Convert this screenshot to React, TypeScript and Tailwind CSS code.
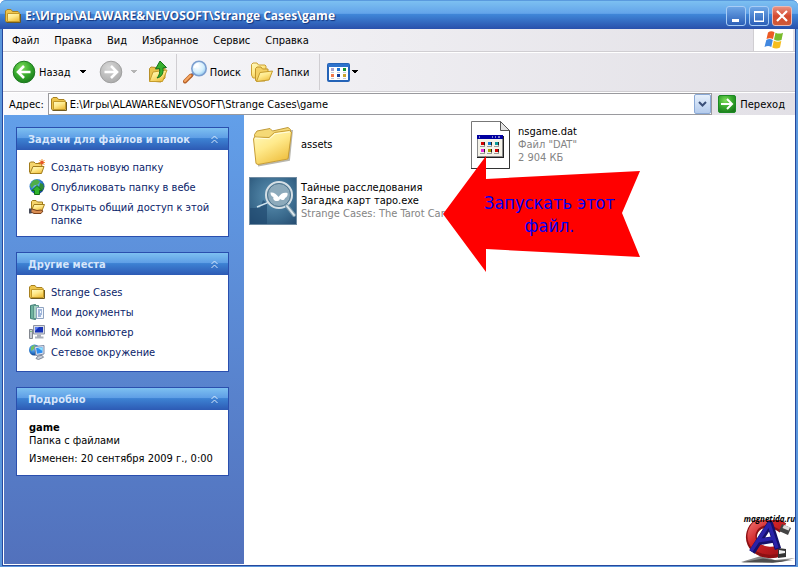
import { useState } from "react";
import type { ReactNode } from "react";

const menuItems = ["Файл", "Правка", "Вид", "Избранное", "Сервис", "Справка"];
const initialPath = "E:\\Игры\\ALAWARE&NEVOSOFT\\Strange Cases\\game";

function Gradients() {
  return (
    <svg className="absolute h-0 w-0" aria-hidden="true">
      <defs>
        <linearGradient id="folder" x1="0" y1="0" x2="0.6" y2="1">
          <stop offset="0" stopColor="#fffbc4" />
          <stop offset="0.5" stopColor="#ffea8c" />
          <stop offset="1" stopColor="#f0c244" />
        </linearGradient>
        <radialGradient id="green" cx="0.4" cy="0.3" r="0.75">
          <stop offset="0" stopColor="#7fdc5c" />
          <stop offset="0.55" stopColor="#35a82c" />
          <stop offset="1" stopColor="#1a7a1c" />
        </radialGradient>
        <radialGradient id="grey" cx="0.4" cy="0.3" r="0.75">
          <stop offset="0" stopColor="#d8d8d8" />
          <stop offset="1" stopColor="#a9a9a9" />
        </radialGradient>
        <radialGradient id="lens" cx="0.4" cy="0.35" r="0.7">
          <stop offset="0" stopColor="#ffffff" />
          <stop offset="0.6" stopColor="#d3eefc" />
          <stop offset="1" stopColor="#8cc6ee" />
        </radialGradient>
        <radialGradient id="globe" cx="0.4" cy="0.35" r="0.7">
          <stop offset="0" stopColor="#8ccbf8" />
          <stop offset="0.6" stopColor="#2a78cc" />
          <stop offset="1" stopColor="#123a80" />
        </radialGradient>
        <radialGradient id="teal" cx="0.5" cy="0.4" r="0.8">
          <stop offset="0" stopColor="#5d93b4" />
          <stop offset="0.6" stopColor="#3a6a8d" />
          <stop offset="1" stopColor="#23496d" />
        </radialGradient>
        <linearGradient id="magnet" x1="0" y1="0" x2="1" y2="1">
          <stop offset="0" stopColor="#ee6a68" />
          <stop offset="0.4" stopColor="#cf2226" />
          <stop offset="1" stopColor="#a31317" />
        </linearGradient>
      </defs>
    </svg>
  );
}

function FolderIcon() {
  return (
    <svg width="16" height="16" viewBox="0 0 16 16" className="shrink-0">
      <path d="M.5 13V3L2 1.500h4l1.500 2h5.500l1 1V13l-1 1H1.500z" fill="#eec54c" stroke="#a88120" />
      <path d="M2.500 5.500h12v8h-12z" fill="url(#folder)" stroke="#c39a2a" />
      <path d="M1.500 14.500h14V6" fill="none" stroke="#6f5a20" />
    </svg>
  );
}

function NewFolderIcon() {
  return (
    <svg width="16" height="16" viewBox="0 0 16 16" className="shrink-0">
      <path d="M.5 13.500V4l1-1h3.500l1.500 1.500h6V7" fill="#f5d56c" stroke="#a27c1c" />
      <path d="M1 14.500L4 7.500h11l-2.500 7z" fill="url(#folder)" stroke="#a27c1c" />
      <path d="M13 0v7M9.500 3.500h7M10.500 1l5 5M15.500 1l-5 5" stroke="#f49a3c" />
      <circle cx="13" cy="3.500" r="1.700" fill="#e5532a" />
    </svg>
  );
}

function PublishIcon() {
  return (
    <svg width="16" height="16" viewBox="0 0 16 16" className="shrink-0">
      <circle cx="8" cy="7.500" r="7.500" fill="url(#globe)" />
      <path d="M4 1.500l4-1 3 2-2 3-4 1-2.500 3L1 6z" fill="#4fae48" />
      <path d="M11 4l3 1 1 4-3 3-2-3z" fill="#2f8b35" />
      <path d="M8 6.500l5 5h-2.500v4h-5v-4H3z" fill="#2fb52c" stroke="#126b18" />
    </svg>
  );
}

function ShareIcon() {
  return (
    <svg width="16" height="16" viewBox="0 0 16 16" className="shrink-0">
      <path d="M2.500 11V2.500l1-1H7l1.500 1.500h5V6" fill="#f5d56c" stroke="#a27c1c" />
      <path d="M2.500 11.500L5 5.500h10.500l-2.500 6z" fill="url(#folder)" stroke="#a27c1c" />
      <path d="M0 11l3-1 5 1.500 4-.5 2 1-2 2.500H5L3 13.500H0z" fill="#d98d52" stroke="#7b431c" />
      <path d="M0 9.500h2.500v5H0z" fill="#474b58" />
    </svg>
  );
}

function DocumentsIcon() {
  return (
    <svg width="16" height="16" viewBox="0 0 16 16" className="shrink-0">
      <path d="M1.500 1.500l5-1v15l-5-1z" fill="#6fb3a0" stroke="#3f7d74" />
      <path d="M4.500 1.500h5v13h-5z" fill="#a5d2c2" stroke="#5b958a" />
      <path d="M7.500 3.500h7v11h-7z" fill="#f4f8fe" stroke="#8fa3c0" />
      <path d="M9 6h4M9 8h2M12 8h1M9 10h4M9 12h3" stroke="#4f77b8" />
    </svg>
  );
}

function ComputerIcon() {
  return (
    <svg width="16" height="16" viewBox="0 0 16 16" className="shrink-0">
      <path d="M.5 5.500h3v9h-3z" fill="#c9cdd4" stroke="#82878f" />
      <path d="M1.500 7.500h1" stroke="#31a531" />
      <path d="M4.500 1.500h11v8.500h-11z" fill="#d7dbe4" stroke="#8d93a3" />
      <path d="M6 3h8v5.500H6z" fill="#1733b8" />
      <path d="M6 3h4L6 7z" fill="#5c7df0" />
      <path d="M8 10.500h4v2h2.500v2H6v-2h2z" fill="#a9afba" />
    </svg>
  );
}

function NetworkIcon() {
  return (
    <svg width="16" height="16" viewBox="0 0 16 16" className="shrink-0">
      <circle cx="5.500" cy="6" r="5.500" fill="url(#globe)" />
      <path d="M2 3l3-2 2 1-2 3-3 2z" fill="#72c45c" />
      <path d="M5.500 2.500l9.500-1v8.500l-8 1.500z" fill="#dfe6f2" stroke="#7f8ca6" />
      <path d="M7 4l6.500-.7v5.400l-5.500 1z" fill="#2d8df0" />
      <path d="M9 4l4.500-.5V7z" fill="#8ce1ff" />
      <path d="M9 12l4-.7 1.500 2-5 2.200-2.500-1z" fill="#c7ced9" stroke="#7d8799" />
    </svg>
  );
}

function ArrowCircle({ fill, stroke, flip }: { fill: string; stroke: string; flip?: boolean }) {
  return (
    <svg width="24" height="24" viewBox="0 0 24 24" className="shrink-0">
      <circle cx="12" cy="12" r="10.800" fill={fill} stroke={stroke} />
      <path
        d={flip ? "M5.500 12h12M12 6l6 6-6 6" : "M18.500 12h-12M12 6l-6 6 6 6"}
        fill="none"
        stroke="#fff"
        strokeWidth="2.600"
      />
    </svg>
  );
}

function UpFolderIcon() {
  return (
    <svg width="22" height="24" viewBox="0 0 22 24" className="shrink-0">
      <path d="M1.500 21V8.500L3 7l5 .500L9.500 9 17 8v10l-4 4z" fill="#eac34c" stroke="#b8902a" />
      <path d="M1.500 21.500L5 12l14-2-4.500 11.500z" fill="url(#folder)" stroke="#c59c2c" />
      <path d="M12 1l6.500 6.500-3.500.3c.6 5.500-1 9-6 10.200 2.500-2.500 3-5.500 2.600-9.500L7.500 9z" fill="#38b02e" stroke="#15711a" />
    </svg>
  );
}

function SearchIcon() {
  return (
    <svg width="25" height="24" viewBox="0 0 25 24" className="shrink-0">
      <path d="M10.500 13.500L7 17" stroke="#7189b8" strokeWidth="3" />
      <path d="M8 15.500L2 21.500" stroke="#b8622a" strokeWidth="4" strokeLinecap="round" />
      <path d="M7.500 15.500L2 21" stroke="#f7a862" strokeWidth="2" strokeLinecap="round" />
      <circle cx="16" cy="8.500" r="7.200" fill="url(#lens)" stroke="#7c9fd0" strokeWidth="1.600" />
      <path d="M11.500 8a5 5 0 0 1 4-4" fill="none" stroke="#fff" strokeWidth="2" />
    </svg>
  );
}

function FoldersIcon() {
  return (
    <svg width="24" height="24" viewBox="0 0 24 24" className="shrink-0">
      <path d="M1.500 15V4.500L3 3h4l1.500 2H15l1 1v10l-2 2H3z" fill="url(#folder)" stroke="#cba033" />
      <path d="M5.500 20V8.500L7 7h4l1.500 2H18v4l-3 8H6z" fill="#f4d164" stroke="#c0952c" />
      <path d="M6.500 21.500L10 12.500 22.500 11 19 20z" fill="url(#folder)" stroke="#c59c2c" />
    </svg>
  );
}

function ViewsIcon() {
  return (
    <svg width="23" height="19" viewBox="0 0 23 19" className="shrink-0">
      <rect x="1" y="1" width="21" height="17" rx="1" fill="#fff" stroke="#2463b7" strokeWidth="2" />
      <path d="M1 1h21v3H1z" fill="#2d72cc" />
      <path d="M4 5h3v3H4z" fill="#a9a3cc" />
      <path d="M10 5h3v3h-3z" fill="#1f74d4" />
      <path d="M16 5h3v3h-3z" fill="#149435" />
      <path d="M4 11h3v3H4z" fill="#f2794b" />
      <path d="M10 11h3v3h-3z" fill="#173f9b" />
      <path d="M16 11h3v3h-3z" fill="#cca32a" />
      <path d="M4 15.500h3M10 15.500h3M16 15.500h3M4 9.500h3M10 9.500h3M16 9.500h3" stroke="#c4c9d6" />
    </svg>
  );
}

function Caret({ className }: { className: string }) {
  return (
    <svg width="7" height="4" viewBox="0 0 7 4" className={className} shapeRendering="crispEdges">
      <path d="M0 0h6L3 3.500z" fill="currentColor" />
    </svg>
  );
}

function WindowsFlag() {
  return (
    <svg width="20" height="18" viewBox="0 0 20 18">
      <path d="M4 1.500c2-1.500 4.500-1.500 6.500-.3L9 8C7 7 4.500 7 2.500 8z" fill="#ec5a24" />
      <path d="M11.500 1.700c2.500 1.200 5 1.200 7.500 0L17.500 9c-2.500 1-5 1-7.500-.5z" fill="#79bb2c" />
      <path d="M2.300 9c2-1.200 4.500-1.200 6.500 0l-1.500 7C5.500 14.700 3 14.500.500 16z" fill="#4188e0" />
      <path d="M9.800 9.500c2.500 1.500 5 1.500 7.500.5L16 16.500c-2.500 1.500-5.500 1.200-7.700 0z" fill="#f6bd1e" />
    </svg>
  );
}

function BigFolder() {
  return (
    <svg width="48" height="48" viewBox="0 0 48 48" className="shrink-0">
      <path d="M9 44.500l31-5.500L43 9" fill="none" stroke="#b9b7ae" strokeWidth="2" />
      <path d="M5.500 13.500L8 10l13-2.500 2.500 2.500 15.500-3.500 2.500 2L39 37 9 42z" fill="#f5d976" stroke="#c09a3a" />
      <path d="M4.500 18l1-2 14.500.5 5.500-5L40 9.500l2.500 1.500-3.500 27L9 43.500l-2-1z" fill="url(#folder)" stroke="#c79d35" />
      <path d="M6 17l14.500.8 5.500-5 15-2" fill="none" stroke="#fffde0" />
    </svg>
  );
}

function ExeIcon() {
  return (
    <svg width="48" height="48" viewBox="0 0 48 48" className="shrink-0">
      <rect x=".5" y=".5" width="47" height="47" fill="url(#teal)" stroke="#6f8ba2" />
      <path d="M1 31h10l3-8 4 3v21H1z" fill="#214a70" opacity="0.700" />
      <path d="M8 30l10-4 2-3" fill="none" stroke="#cfe3ee" strokeWidth="1.500" />
      <circle cx="30" cy="18" r="13" fill="#7f9fb2" stroke="#d5dfe5" strokeWidth="2" />
      <circle cx="30" cy="18" r="11.500" fill="#8daabb" stroke="#4d748e" />
      <path d="M29.500 20c-2-3-5-5-8-4.500 0 2.500 1 4 3 4.500-1 2 1 4.500 4 4 1.500 0 2-1 2.500-2 2 1.500 4.500 1.500 5-1 2-1 3-2.500 2.500-5-4-1-6.500.5-9 4z" fill="#fff" />
      <path d="M38 29l7 9" stroke="#7b9aac" strokeWidth="4" strokeLinecap="round" />
      <path d="M38 29l7 9" stroke="#dde7ec" strokeWidth="2" strokeLinecap="round" />
    </svg>
  );
}

const datDots = [
  { x: 15, y: 22, color: "#d40000" },
  { x: 22, y: 22, color: "#0a7ad8" },
  { x: 29, y: 22, color: "#0a9a9a" },
  { x: 15, y: 29, color: "#e82ad8" },
  { x: 22, y: 29, color: "#a8a000" },
  { x: 29, y: 29, color: "#d40000" },
];

function DatIcon() {
  return (
    <svg width="48" height="48" viewBox="0 0 48 48" className="shrink-0">
      <path d="M5.500.5h29l9 9v38h-38z" fill="#fff" stroke="#777" />
      <path d="M5 47.500h38.500V9" fill="none" stroke="#333" />
      <path d="M34.500.5v9h9z" fill="#e2e2e2" stroke="#555" />
      <path d="M11 15h27v22H11z" fill="#222" />
      <path d="M11.500 14.500h25v21h-25z" fill="#f4f2e8" stroke="#8d8d8d" />
      <path d="M11 14h26v4H11z" fill="#0000a0" />
      <path d="M13 16h1M26 16h1M29 16h1M32 16h2" stroke="#fff" />
      {datDots.map((d) => (
        <g key={`${d.x}-${d.y}`}>
          <rect x={d.x} y={d.y - 1} width="3" height="3" fill={d.color} />
          <path d={`M${d.x + 3.5} ${d.y - 1}v3.500`} stroke="#222" />
          <path d={`M${d.x - 1} ${d.y + 3.5}h5`} stroke="#999" />
        </g>
      ))}
    </svg>
  );
}

function MagnetLogo() {
  return (
    <svg width="54" height="44" viewBox="0 0 54 44" aria-hidden="true">
      <path d="M0 42L20 36l14 4 20-2-14 4z" fill="#8b8b8b" />
      <path d="M0 42.500l22-4 14 2 16-.5-20 3z" fill="#333" opacity="0.700" />
      <path d="M42 8C31 0 15 0 11 13c-4 15 13 23 28 18" fill="none" stroke="#8d1013" strokeWidth="11" />
      <path d="M42 7C31-1 15-1 11 12c-4 15 13 22 28 17" fill="none" stroke="url(#magnet)" strokeWidth="8" />
      <path d="M41 4l9 4-3 7-9-4z" fill="#444" />
      <path d="M43 5l6 2.500-1.500 3-6-2.500z" fill="#ddd" />
      <path d="M37 28l8 1v8l-8 1z" fill="#333" />
      <path d="M38 30l6 1v2l-6 1z" fill="#eee" />
      <path d="M11 32L29 4l8 25M17 22l18-3" fill="none" stroke="#15106b" strokeWidth="6.500" strokeLinejoin="round" />
      <path d="M10 31L28 4l8 24M16 21l18-3" fill="none" stroke="#2a22a8" strokeWidth="3.500" strokeLinejoin="round" />
    </svg>
  );
}

interface PanelProps {
  title: string;
  children: ReactNode;
}

function Panel({ title, children }: PanelProps) {
  const [open, setOpen] = useState(true);

  return (
    <section className="border border-[#2a4fae] bg-white">
      <button
        type="button"
        aria-expanded={open}
        onClick={() => setOpen(!open)}
        className="flex h-[22px] w-full items-center justify-between bg-[linear-gradient(#7dc0f1,#5f9fe6_44%,#3d82d3_48%,#2d5ab4)] pt-px pr-[9px] pl-[11px] text-left font-bold text-[#d6e6fb]"
      >
        {title}
        <svg width="9" height="9" viewBox="0 0 9 9" fill="none" stroke="currentColor">
          <path d="M1.500 4l3-3 3 3M1.500 8l3-3 3 3" />
        </svg>
      </button>
      {open && children}
    </section>
  );
}

function LinkList({ items, className }: { items: { label: string; icon: ReactNode }[]; className: string }) {
  return (
    <ul className={`flex flex-col gap-1 px-3 pt-[9px] ${className}`}>
      {items.map((item) => (
        <li key={item.label}>
          <a href="#" className="flex items-start gap-[6px] pt-px leading-[13px] text-[#0a246a] hover:underline">
            <span className="-mt-px h-4 shrink-0">{item.icon}</span>
            <span className="pt-px">{item.label}</span>
          </a>
        </li>
      ))}
    </ul>
  );
}

const tasks = [
  { label: "Создать новую папку", icon: <NewFolderIcon /> },
  { label: "Опубликовать папку в вебе", icon: <PublishIcon /> },
  { label: "Открыть общий доступ к этой папке", icon: <ShareIcon /> },
];

const places = [
  { label: "Strange Cases", icon: <FolderIcon /> },
  { label: "Мои документы", icon: <DocumentsIcon /> },
  { label: "Мой компьютер", icon: <ComputerIcon /> },
  { label: "Сетевое окружение", icon: <NetworkIcon /> },
];

const files = [
  { name: ["assets"], info: [], icon: <BigFolder /> },
  { name: ["nsgame.dat"], info: ["Файл \"DAT\"", "2 904 КБ"], icon: <DatIcon /> },
  {
    name: ["Тайные расследования", "Загадка карт таро.exe"],
    info: ["Strange Cases: The Tarot Card"],
    icon: <ExeIcon />,
  },
];

export default function App() {
  const [path, setPath] = useState(initialPath);

  return (
    <div className="flex min-h-screen flex-col rounded-t-md bg-[#5b97dc] pr-[2px] pb-px pl-[2px] font-['DejaVu_Sans_Condensed','DejaVu_Sans',sans-serif] text-[11px] leading-[13px] text-black">
      <Gradients />
      <header className="-mx-[2px] flex h-[29px] items-center gap-1 rounded-t-md border-t border-[#5a9ade] bg-[linear-gradient(#7cc0f1,#63a4ea_44%,#3f86d8_48%,#2950ab)] pt-[2px] pr-[6px] pl-[5px]">
        <FolderIcon />
        <h1 className="flex-1 truncate font-['Open_Sans','Noto_Sans',sans-serif] text-[12px] leading-5 font-bold text-white [text-shadow:1px_1px_1px_#12337c]">
          {initialPath}
        </h1>
        <div className="flex gap-[3px]">
          <button type="button" aria-label="Свернуть" className="flex h-5 w-5 items-center justify-center rounded-[3px] border border-[#a9cdf5] bg-linear-to-b from-[#6ea6e6] to-[#2c5fb8]">
            <svg width="14" height="14" viewBox="0 0 14 14">
              <path d="M3 10h7v3H3z" fill="#fff" />
            </svg>
          </button>
          <button type="button" aria-label="Развернуть" className="flex h-5 w-5 items-center justify-center rounded-[3px] border border-[#a9cdf5] bg-linear-to-b from-[#6ea6e6] to-[#2c5fb8]">
            <svg width="14" height="14" viewBox="0 0 14 14" fill="none" stroke="#fff">
              <path d="M2.500 2v10h9V2M2 12.500h10M2 2.500h10M2 3.500h10" />
            </svg>
          </button>
          <button type="button" aria-label="Закрыть" className="flex h-5 w-5 items-center justify-center rounded-[3px] border border-[#e9b9b4] bg-linear-to-b from-[#e89080] via-[#d5492f] to-[#cf5a38]">
            <svg width="14" height="14" viewBox="0 0 14 14" stroke="#fff" strokeWidth="2.200">
              <path d="M2 2l10 10M12 2L2 12" />
            </svg>
          </button>
        </div>
      </header>

      <div className="flex flex-1 flex-col border-x border-b border-[#27489c] bg-white">
        <div className="bg-linear-to-r from-[#fafafc] to-[#e2e0e6]">
          <nav className="flex h-[23px] items-stretch border-b border-[#d0ced2]">
            <ul className="flex flex-1 items-center gap-[15px] pl-[9px]">
              {menuItems.map((item) => (
                <li key={item}>
                  <button type="button">{item}</button>
                </li>
              ))}
            </ul>
            <div className="mr-[2px] flex w-10 items-center justify-center border-l border-[#d0ced2] bg-white">
              <WindowsFlag />
            </div>
          </nav>

          <div className="flex h-10 items-center border-t border-b border-t-white border-b-[#d0ced2] pl-[9px]">
            <button type="button" className="flex items-center gap-[3px]">
              <ArrowCircle fill="url(#green)" stroke="#1d7a20" />
              Назад
            </button>
            <Caret className="ml-[9px] text-black" />
            <button type="button" aria-label="Вперед" disabled className="ml-3">
              <ArrowCircle fill="url(#grey)" stroke="#a0a0a0" flip />
            </button>
            <Caret className="ml-2 text-[#b5b5b5]" />
            <button type="button" aria-label="Вверх" className="ml-[10px]">
              <UpFolderIcon />
            </button>
            <div className="ml-[6px] h-9 w-px bg-[#d0ced2]" />
            <button type="button" className="ml-[6px] flex items-center gap-[2px]">
              <SearchIcon />
              Поиск
            </button>
            <button type="button" className="ml-[9px] flex items-center gap-[3px]">
              <FoldersIcon />
              Папки
            </button>
            <div className="ml-[10px] h-9 w-px bg-[#d0ced2]" />
            <button type="button" aria-label="Вид" className="ml-[7px] flex items-center gap-[2px]">
              <ViewsIcon />
              <Caret className="text-black" />
            </button>
          </div>

          <form className="flex h-[23px] items-center border-t border-white pr-[10px] pl-[6px]" onSubmit={(e) => e.preventDefault()}>
            <label htmlFor="address" className="mr-1">
              Адрес:
            </label>
            <div className="flex h-[22px] flex-1 items-center border border-[#9a9a9e] bg-white pl-[2px]">
              <FolderIcon />
              <input
                id="address"
                value={path}
                onChange={(e) => setPath(e.target.value)}
                className="ml-[3px] h-4 min-w-0 flex-1 bg-transparent outline-none"
              />
              <button type="button" aria-label="Список адресов" className="flex h-5 w-[17px] items-center justify-center rounded-[2px] border border-[#8aa9d6] bg-linear-to-b from-[#e6f0fc] to-[#b4cbec]">
                <svg width="9" height="7" viewBox="0 0 9 7" fill="none" stroke="#3a4f78" strokeWidth="2">
                  <path d="M1 1l3.500 3.500L8 1" />
                </svg>
              </button>
            </div>
            <button type="submit" className="ml-[6px] flex items-center gap-1">
              <svg width="18" height="18" viewBox="0 0 18 18">
                <rect x=".5" y=".5" width="17" height="17" rx="1.500" fill="url(#green)" stroke="#1d8a24" />
                <path d="M3 9h10M9 4l5 5-5 5" fill="none" stroke="#fff" strokeWidth="2" />
              </svg>
              Переход
            </button>
          </form>
        </div>

        <div className="flex flex-1 border border-t-0 border-r-0 border-white">
          <aside className="flex w-60 shrink-0 flex-col gap-[15px] bg-linear-to-b from-[#629fe9] to-[#5271bc] py-3 pr-[15px] pl-3">
            <Panel title="Задачи для файлов и папок">
              <LinkList items={tasks} className="pb-[9px]" />
            </Panel>
            <Panel title="Другие места">
              <LinkList items={places} className="pb-[11px]" />
            </Panel>
            <Panel title="Подробно">
              <div className="px-3 pt-[11px] pb-[10px]">
                <p className="font-bold">game</p>
                <p>Папка с файлами</p>
                <p className="pt-[5px]">Изменен: 20 сентября 2009 г., 0:00</p>
              </div>
            </Panel>
          </aside>

          <main className="relative flex-1">
            <ul className="grid grid-cols-[repeat(2,217px)] gap-y-2 pt-[6px] pl-[5px]">
              {files.map((file) => (
                <li key={file.name[0]} className="flex h-12 items-center gap-1 overflow-hidden">
                  {file.icon}
                  <div className="pb-[2px] whitespace-nowrap">
                    {file.name.map((line) => (
                      <p key={line}>{line}</p>
                    ))}
                    {file.info.map((line) => (
                      <p key={line} className="text-[#848484]">
                        {line}
                      </p>
                    ))}
                  </div>
                </li>
              ))}
            </ul>

            <div className="absolute top-[41px] left-[199px] flex h-[116px] w-[197px] items-center justify-center">
              <svg className="absolute inset-0" width="197" height="116" viewBox="0 0 197 116" aria-hidden="true">
                <path d="M0 58L43 0v23l154-8-18 42 18 44-154-8v23z" fill="#f00" />
              </svg>
              <p className="relative w-40 pl-4 text-center text-[18px] leading-[23px] text-[#0000f0]">
                Запускать этот файл.
              </p>
            </div>

            <div className="absolute right-0 bottom-0 flex flex-col items-end">
              <span className="z-10 -mb-1 font-['Open_Sans',sans-serif] text-[8px] leading-[10px] font-bold italic">magnetida.ru</span>
              <MagnetLogo />
            </div>
          </main>
        </div>
      </div>
    </div>
  );
}
